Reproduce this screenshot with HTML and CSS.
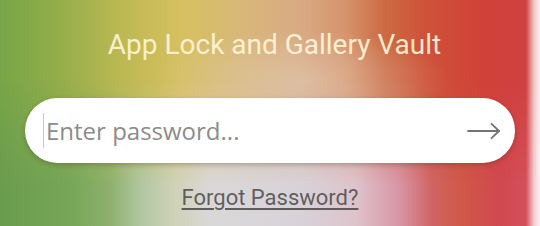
FILE: index.html
```html
<!DOCTYPE html>
<html lang="en">
<head>
<meta charset="utf-8">
<title>App Lock and Gallery Vault</title>
<link rel="stylesheet" href="styles.css">
</head>
<body>
<main class="screen">
  <h1 class="title">App Lock and Gallery Vault</h1>
  <form class="pass-field" onsubmit="return false">
    <span class="caret"></span>
    <input class="pass-input" type="password" placeholder="Enter password...">
    <button class="go" type="submit" aria-label="Unlock">
      <svg width="34" height="18" viewBox="0 0 34 18" fill="none" stroke="#737373" stroke-width="1.8" stroke-linecap="round" stroke-linejoin="round">
        <path d="M1 9 H32"/>
        <path d="M24.5 1.8 L32 9 L24.5 16.2"/>
      </svg>
    </button>
  </form>
  <a class="forgot" href="#">Forgot Password?</a>
</main>
</body>
</html>
```
FILE: styles.css
```css
html, body {
  margin: 0;
  padding: 0;
  width: 540px;
  height: 226px;
  overflow: hidden;
}

.screen {
  position: relative;
  width: 540px;
  height: 226px;
  box-sizing: border-box;
  padding-top: 29px;
  display: flex;
  flex-direction: column;
  align-items: center;
  font-family: Roboto, "Liberation Sans", sans-serif;
  background:
    linear-gradient(to right, rgba(255,255,255,0) 0, rgba(255,255,255,0) 526px, rgba(248,220,220,0.85) 534px, #fbf4f4 540px),
    linear-gradient(to right,
      #78a548 0px,
      #94ae4a 60px,
      #bcb852 120px,
      #d6c060 180px,
      #d8b878 240px,
      #d8aa84 300px,
      #d6946c 345px,
      #cc6a42 385px,
      #cf5238 425px,
      #d04238 480px,
      #d04040 525px);
  overflow: hidden;
}

.screen::before {
  content: "";
  position: absolute;
  inset: 0;
  background:
    linear-gradient(to right, rgba(255,255,255,0) 0, rgba(255,255,255,0) 526px, rgba(248,225,232,0.85) 534px, #fbf4f6 540px),
    linear-gradient(to right,
      #6a9c4e 0px,
      #76a656 70px,
      #8eb06e 110px,
      #b0c6a0 140px,
      #d0d2b8 175px,
      #d9d8d8 210px,
      #d8d2d8 300px,
      #dec4cc 355px,
      #d894a4 400px,
      #d06464 432px,
      #d05848 462px,
      #d04850 500px,
      #d45058 526px);
  -webkit-mask-image: linear-gradient(to bottom, transparent 35%, #000 82%);
  mask-image: linear-gradient(to bottom, transparent 35%, #000 82%);
  z-index: 0;
}

.screen::after {
  content: "";
  position: absolute;
  inset: 0;
  background: radial-gradient(ellipse 150px 50px at 300px 80px, rgba(226,206,186,0.55), rgba(226,206,186,0));
  z-index: 0;
}

.title, .pass-field, .forgot {
  position: relative;
  z-index: 1;
}

.title {
  margin: 0 0 0 9px;
  font-family: Roboto, "Liberation Sans", sans-serif;
  font-weight: 400;
  font-size: 28px;
  line-height: 32px;
  color: rgba(255, 246, 218, 0.92);
}

.pass-field {
  margin-top: 37px;
  width: 490px;
  height: 65px;
  box-sizing: border-box;
  border-radius: 33px;
  background: #ffffff;
  box-shadow: 0 2px 5px rgba(60, 40, 30, 0.28);
  display: flex;
  align-items: center;
  padding: 0 14px 0 18px;
}

.caret {
  width: 1px;
  height: 35px;
  background: #c8c8c8;
  flex: none;
}

.pass-input {
  flex: 1;
  min-width: 0;
  border: 0;
  outline: 0;
  background: transparent;
  padding: 0 0 0 2px;
  font-family: "Open Sans", Roboto, sans-serif;
  font-size: 24px;
  color: #8a8a8a;
}

.pass-input::placeholder {
  color: #8c8c8c;
  opacity: 1;
}

.go {
  border: 0;
  background: transparent;
  padding: 0;
  width: 34px;
  height: 18px;
  display: flex;
  cursor: pointer;
}

.forgot {
  margin-top: 22px;
  font-family: Roboto, "Liberation Sans", sans-serif;
  font-size: 22px;
  line-height: 25px;
  color: rgba(70, 66, 66, 0.82);
  text-decoration: underline;
  text-decoration-thickness: 1.5px;
  text-underline-offset: 3px;
}
```
